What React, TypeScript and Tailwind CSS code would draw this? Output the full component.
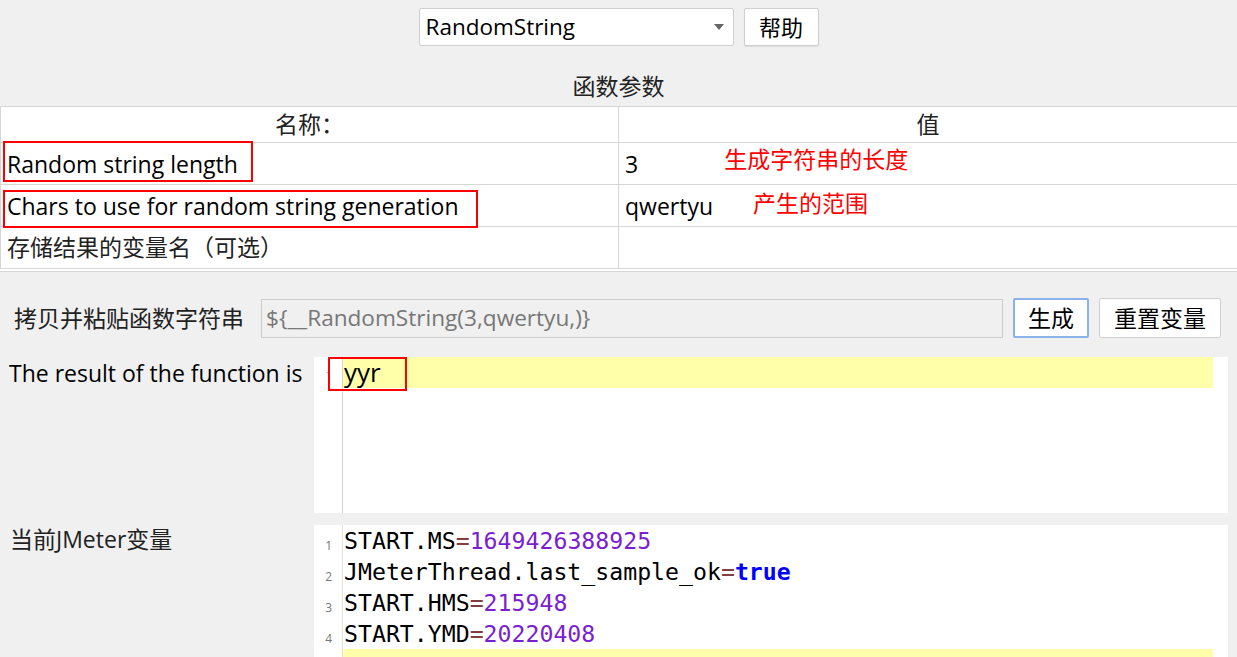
import React from 'react';

const ui = "font-['Open_Sans','Noto_Sans_CJK_SC',sans-serif]";
const mono = "font-['DejaVu_Sans_Mono','Liberation_Mono',monospace]";

const vars: { key: string; value: string; kind: 'num' | 'bool' }[] = [
  { key: 'START.MS', value: '1649426388925', kind: 'num' },
  { key: 'JMeterThread.last_sample_ok', value: 'true', kind: 'bool' },
  { key: 'START.HMS', value: '215948', kind: 'num' },
  { key: 'START.YMD', value: '20220408', kind: 'num' },
];

const params = [
  { name: 'Random string length', value: '3', note: '生成字符串的长度', box: 'top-[-2px] h-[41px] w-[250px]', noteOffset: 'ml-[86px] -mt-[8px]' },
  { name: 'Chars to use for random string generation', value: 'qwertyu', note: '产生的范围', box: 'top-[5px] h-[38px] w-[475px]', noteOffset: 'ml-[40px] -mt-[5px]' },
];

const App = () => {
  return (
    <div className={`${ui} h-[657px] w-[1237px] overflow-hidden bg-[#f0f0f0] text-black`}>
      {/* Function selector */}
      <div className="flex justify-center gap-[10px] pt-[8px]">
        <div className="flex h-[38px] w-[315px] items-center justify-between rounded-[2px] border border-[#cfcfcf] bg-white pl-[6px] pr-[9px]">
          <span className="text-[22.5px] leading-none">RandomString</span>
          <svg width="10" height="6" viewBox="0 0 10 6">
            <path d="M0 0h10L5 6z" fill="#666" />
          </svg>
        </div>
        <button className="flex h-[38px] w-[75px] items-center justify-center rounded-[2px] border border-[#cfcfcf] bg-white text-[22px] leading-none shadow-[0_1px_1px_rgba(0,0,0,0.08)]">
          帮助
        </button>
      </div>

      <div className="h-[60px] pt-[25px] text-center text-[23px] leading-[30px] text-[#222]">函数参数</div>

      {/* Parameters table */}
      <div className="h-[166px] border-y border-[#d6d6d6] bg-white">
        <div className="grid grid-cols-[618px_1fr] border-l border-[#d6d6d6]">
          <div className="flex h-[36px] items-center justify-center border-r border-b border-[#d6d6d6] text-[23px] text-[#222]">名称：</div>
          <div className="flex h-[36px] items-center justify-center border-b border-[#d6d6d6] text-[23px] text-[#222]">值</div>
          {params.map((p) => (
            <React.Fragment key={p.name}>
              <div className="relative flex h-[42px] items-center border-r border-b border-[#d6d6d6] pl-[6px] text-[23px]">
                <span className="mt-[2px]">{p.name}</span>
                <div className={`absolute left-[2px] ${p.box} border-2 border-[#ff0000]`} />
              </div>
              <div className="flex h-[42px] items-center border-b border-[#d6d6d6] pl-[6px] text-[23px]">
                <span className="mt-[2px]">{p.value}</span>
                <span className={`${p.noteOffset} text-[23px] text-[#ff0000]`}>{p.note}</span>
              </div>
            </React.Fragment>
          ))}
          <div className="flex h-[42px] items-center border-r border-b border-[#d6d6d6] pl-[6px] text-[23px] text-[#222]">存储结果的变量名（可选）</div>
          <div className="h-[42px] border-b border-[#d6d6d6]" />
        </div>
      </div>

      {/* Copy & paste row */}
      <div className="mt-[26px] flex h-[40px] items-center pr-[16px]">
        <span className="w-[261px] pl-[14px] text-[23px] text-[#222]">拷贝并粘贴函数字符串</span>
        <div className="flex h-[39px] flex-1 items-center border border-[#cccccc] bg-[#f0f0f0] pl-[4px] text-[22.6px] text-[#777]">
          {'${__RandomString(3,qwertyu,)}'}
        </div>
        <button className="ml-[10px] flex h-[40px] w-[76px] items-center justify-center rounded-[2px] border-2 border-[#8ab4e8] bg-white text-[23px] leading-none">
          生成
        </button>
        <button className="ml-[10px] flex h-[40px] w-[122px] items-center justify-center rounded-[2px] border border-[#cfcfcf] bg-white text-[23px] leading-none">
          重置变量
        </button>
      </div>

      {/* Result */}
      <div className="mt-[19px] flex">
        <div className="w-[314px] pt-[1px] pl-[9px] text-[23px] leading-[30px]">The result of the function is</div>
        <div className="relative mr-[9px] flex h-[156px] flex-1 bg-white">
          <div className="w-[29px] border-r border-[#d4d4d4] pt-[12px] pr-[10px] text-right text-[11px] leading-none text-[#888]">1</div>
          <div className="flex-1 pr-[15px]">
            <div className="h-[31px] bg-[#ffffaa] pl-[1px] text-[26px] leading-[31px]">yyr</div>
          </div>
          <div className="absolute top-[0px] left-[14px] h-[34px] w-[79px] border-2 border-[#ff0000]" />
        </div>
      </div>

      {/* Current JMeter variables */}
      <div className="mt-[12px] flex">
        <div className="w-[314px] pl-[10px] text-[23px] leading-[28px] text-[#222]">当前JMeter变量</div>
        <div className="mr-[9px] flex h-[140px] flex-1 bg-white">
          <div className="w-[29px] border-r border-[#e2e2e2] pr-[10px] text-right">
            {vars.map((v, i) => (
              <div key={v.key} className="flex h-[31px] items-end justify-end pb-[4px] text-[12px] leading-none text-[#777]">
                {i + 1}
              </div>
            ))}
          </div>
          <div className={`${mono} flex-1 pr-[15px] text-[23.2px]`}>
            {vars.map((v) => (
              <div key={v.key} className="h-[31px] pl-[1px] leading-[31px] whitespace-pre">
                <span>{v.key}</span>
                <span className="text-[#7f3f3f]">=</span>
                {v.kind === 'bool' ? (
                  <span className="font-bold text-[#0000ff]">{v.value}</span>
                ) : (
                  <span className="text-[#7a1fd0]">{v.value}</span>
                )}
              </div>
            ))}
            <div className="h-[31px] bg-[#ffffaa]" />
          </div>
        </div>
      </div>
    </div>
  );
};

export default App;
